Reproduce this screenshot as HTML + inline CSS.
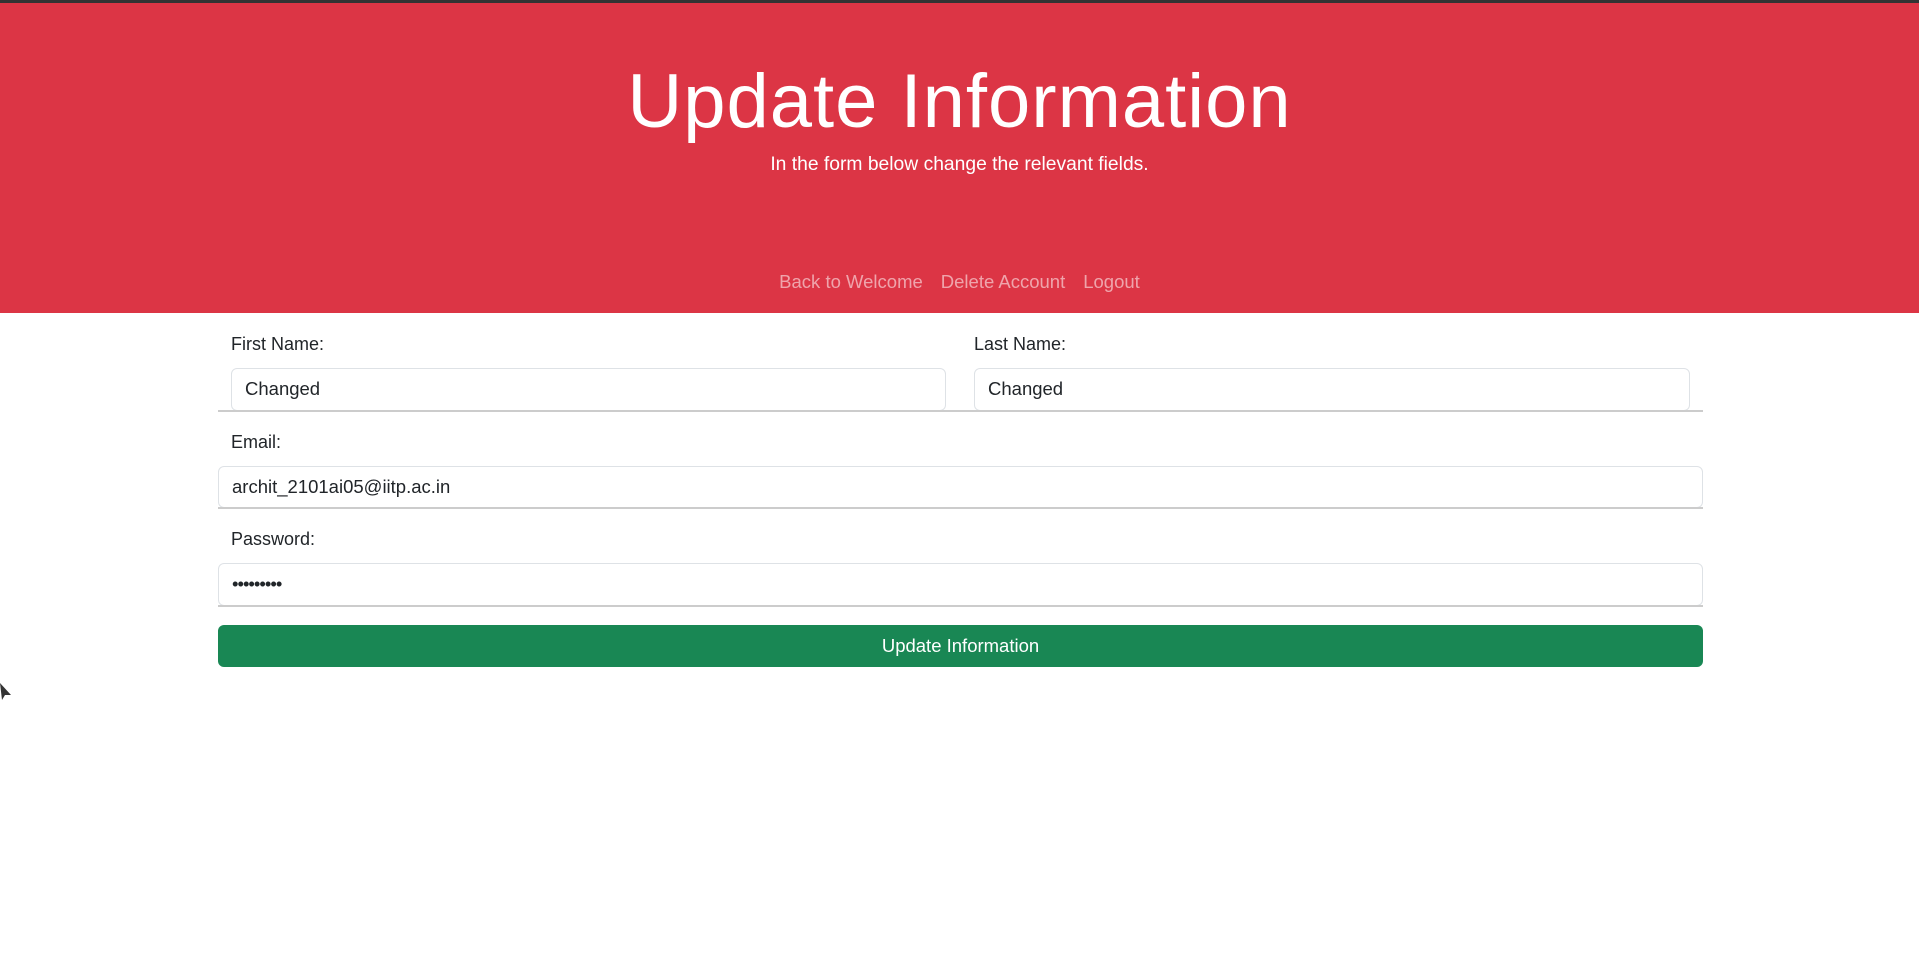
<!DOCTYPE html>
<html><head><meta charset="utf-8"><style>
*{box-sizing:border-box;margin:0;padding:0}
body{width:1919px;height:963px;background:#fff;font-family:"Liberation Sans",sans-serif;color:#212529;position:relative;overflow:hidden}
.top{position:absolute;left:0;top:0;width:1919px;height:3px;background:#333}
.hdr{position:absolute;left:0;top:3px;width:1919px;height:310px;background:#dc3545;color:#fff;text-align:center}
h1{position:absolute;left:0;right:0;top:54px;font-weight:normal;font-size:76px;letter-spacing:1px;line-height:90px}
.sub{position:absolute;left:0;right:0;top:150px;font-size:19.3px;line-height:24px}
.nav{position:absolute;left:0;right:0;top:267px;font-size:18.5px;line-height:24px;color:rgba(255,255,255,.55)}
.nav span{margin:0 9px}
.lbl{position:absolute;font-size:18px;line-height:24px}
.in{position:absolute;border:1px solid #dee2e6;border-radius:6px;font-size:18.5px;line-height:40px;padding-left:13px;background:#fff}
.line{position:absolute;left:218px;width:1485px;height:2px;background:#ccc}
.btn{position:absolute;left:218px;top:625px;width:1485px;height:42px;background:#198754;border-radius:6px;color:#fff;text-align:center;font-size:18.5px;line-height:42px}
</style></head><body>
<div class="top"></div>
<div class="hdr">
<h1>Update Information</h1>
<div class="sub">In the form below change the relevant fields.</div>
<div class="nav"><span>Back to Welcome</span><span>Delete Account</span><span>Logout</span></div>
</div>
<div class="lbl" style="left:231px;top:332px">First Name:</div>
<div class="lbl" style="left:974px;top:332px">Last Name:</div>
<div class="in" style="left:231px;top:368px;width:715px;height:43px">Changed</div>
<div class="in" style="left:974px;top:368px;width:716px;height:43px">Changed</div>
<div class="line" style="top:410px"></div>
<div class="lbl" style="left:231px;top:430px">Email:</div>
<div class="in" style="left:218px;top:466px;width:1485px;height:42px">archit_2101ai05@iitp.ac.in</div>
<div class="line" style="top:507px"></div>
<div class="lbl" style="left:231px;top:527px">Password:</div>
<div class="in" style="left:218px;top:563px;width:1485px;height:43px;letter-spacing:-1px">•••••••••</div>
<div class="line" style="top:605px"></div>
<div class="btn">Update Information</div>
<svg style="position:absolute;left:0;top:683px" width="12" height="18"><path d="M0 0L11 12L5 12L2 17Z" fill="#333"/></svg>
</body></html>
